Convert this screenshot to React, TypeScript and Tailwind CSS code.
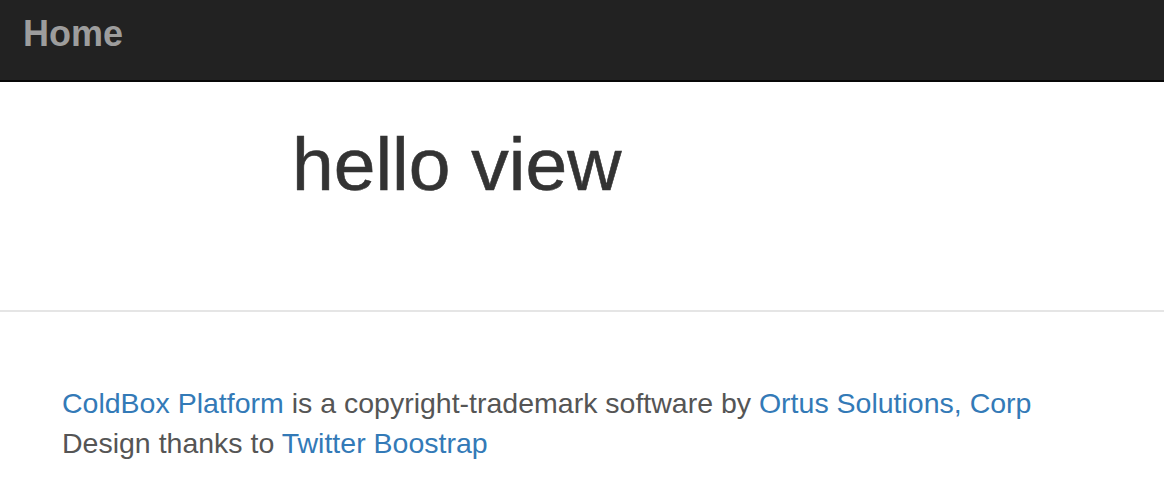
export default function App() {
  return (
    <div className="min-h-screen bg-white" style={{ fontFamily: '"Liberation Sans", Arial, sans-serif' }}>
      {/* Navbar */}
      <nav className="h-[82px] bg-[#222222] border-b-2 border-[#080808]">
        <a href="#" className="block pl-[23px] pt-[14px] text-[36px] font-bold leading-[40px] text-[#9d9d9d]">
          Home
        </a>
      </nav>

      {/* Main */}
      <div className="h-[228px] pl-[292px] pt-[42px]">
        <h1 className="text-[75px] leading-[80px] text-[#333333] [-webkit-text-stroke:0.6px_#333333]">hello view</h1>
      </div>

      <hr className="border-0 border-t-2 border-[#e5e5e5]" />

      {/* Footer */}
      <footer className="pl-[62px] pt-[71px] text-[28.5px] leading-[40px] text-[#555555]">
        <p>
          <a href="#" className="text-[#337ab7]">ColdBox Platform</a> is a copyright-trademark software by{' '}
          <a href="#" className="text-[#337ab7]">Ortus Solutions, Corp</a>
        </p>
        <p>
          Design thanks to <a href="#" className="text-[#337ab7]">Twitter Boostrap</a>
        </p>
      </footer>
    </div>
  );
}
